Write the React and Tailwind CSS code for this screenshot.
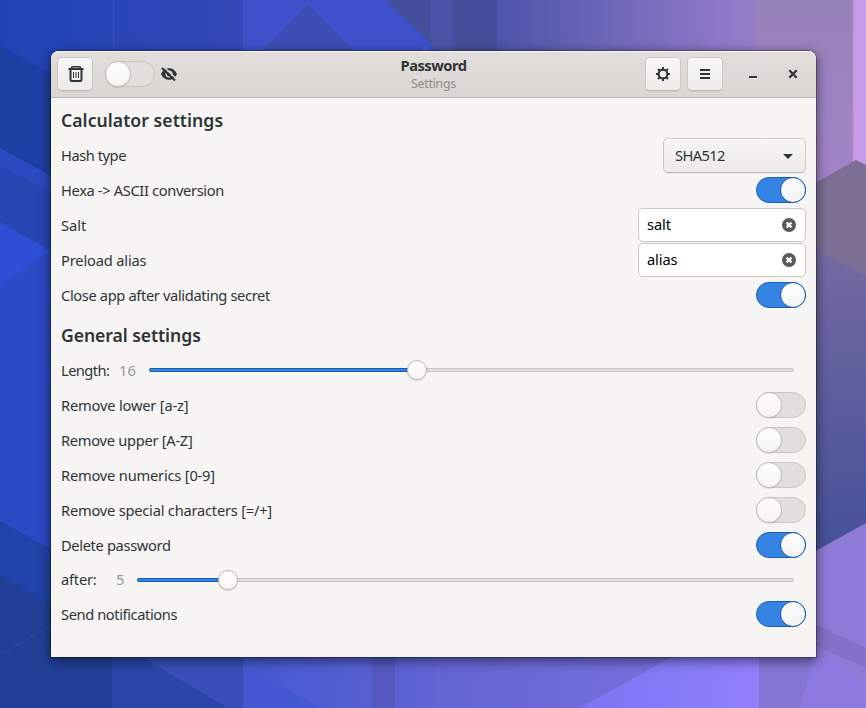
import React from "react";
import clsx from "clsx";

function Wallpaper() {
  return (
    <svg className="absolute inset-0" width="866" height="708" viewBox="0 0 866 708">
      <defs>
        <linearGradient id="base" x1="0" x2="1" y1="0" y2="0">
          <stop offset="0" stopColor="#1f43b6" />
          <stop offset="0.28" stopColor="#3449b8" />
          <stop offset="0.57" stopColor="#4a52a5" />
          <stop offset="0.87" stopColor="#977ccb" />
          <stop offset="1" stopColor="#a98bbd" />
        </linearGradient>
        <linearGradient id="violet" x1="0" x2="1" y1="0" y2="0">
          <stop offset="0" stopColor="#4d55aa" />
          <stop offset="1" stopColor="#987dcc" />
        </linearGradient>
        <linearGradient id="mauve" x1="0" x2="0" y1="0" y2="1">
          <stop offset="0" stopColor="#9882ba" />
          <stop offset="1" stopColor="#a384c8" />
        </linearGradient>
        <linearGradient id="indigo" x1="0" x2="0" y1="0" y2="1">
          <stop offset="0" stopColor="#756aa3" />
          <stop offset="1" stopColor="#445098" />
        </linearGradient>
        <linearGradient id="floor" gradientUnits="userSpaceOnUse" x1="243" x2="660" y1="0" y2="0">
          <stop offset="0" stopColor="#4458d0" />
          <stop offset="0.5" stopColor="#6465d4" />
          <stop offset="1" stopColor="#766fdc" />
        </linearGradient>
        <linearGradient id="glow" gradientUnits="userSpaceOnUse" x1="580" x2="759" y1="0" y2="0">
          <stop offset="0" stopColor="#7a75f2" />
          <stop offset="1" stopColor="#9280fd" />
        </linearGradient>
      </defs>
      <rect width="866" height="708" fill="url(#base)" />
      <path d="M113.5 0V60" stroke="#3650c0" strokeWidth="1.5" />
      <path d="M243 0H386L480 90H230L243 70Z" fill="#3f50cb" />
      <path d="M308 4L394 90H222Z" fill="#3c4eb6" />
      <path d="M386 0H497V90H480Z" fill="#454e9a" />
      <path d="M430 0H453V66L430 43Z" fill="#4b53a6" />
      <path d="M425 46L438 59V88H394L388 81Z" fill="#4e59d6" />
      <rect x="497" width="258" height="90" fill="url(#violet)" />
      <rect x="755" width="98" height="190" fill="url(#mauve)" />
      <rect x="853" width="13" height="170" fill="#c79de9" />
      <path d="M853 0V158" stroke="#b58dbd" strokeWidth="1" />
      <path d="M810 186L856 160L866 165V280L810 250Z" fill="#7c6e95" />
      <path d="M810 247L866 276V530L810 555Z" fill="url(#indigo)" />
      <path d="M810 554L866 523V708H810Z" fill="#8f7ad7" />
      <path d="M810 622L866 648V668L810 643Z" fill="#8571c8" />
      <path d="M0 45L60 79V185L0 152Z" fill="#1c3fa3" />
      <path d="M0 148L60 181V197L0 167Z" fill="#2c49c2" />
      <path d="M0 166L60 196V258L0 222Z" fill="#2745b3" />
      <path d="M0 222L60 258V560L0 522Z" fill="#2b4ac5" />
      <path d="M0 222L51 251L0 285Z" fill="#2e4ed5" />
      <path d="M0 521L60 554V612L0 576Z" fill="#2142a8" />
      <path d="M0 576L60 608V650H113V708H0Z" fill="#213f97" />
      <path d="M0 655L60 620" stroke="#28479f" strokeWidth="1.5" />
      <rect x="112" y="650" width="131" height="58" fill="#2a46a9" />
      <path d="M130 650H243V708H228Z" fill="#394eb8" />
      <rect x="243" y="650" width="520" height="58" fill="url(#floor)" />
      <path d="M243 668L322 708H243Z" fill="#4358d2" />
      <rect x="371" y="650" width="24" height="58" fill="#5458bf" />
      <path d="M437 650V708" stroke="#696bdd" />
      <path d="M684 650H759V708H580Z" fill="url(#glow)" />
      <path d="M759 650H816L866 690V708H759Z" fill="#8475d3" />
      <path d="M816 648L866 686V708H800Z" fill="#8d7ae0" />
    </svg>
  );
}

function Switch({ on }) {
  return (
    <div
      className={clsx(
        "flex h-[26px] w-[50px] shrink-0 rounded-full border",
        on ? "justify-end border-[#185fb4] bg-[#3584e4]" : "justify-start border-[#cdc7c2] bg-[#e1dedb]"
      )}
    >
      <div
        className={clsx(
          "-m-px size-[26px] rounded-full border bg-linear-to-b from-white to-[#f4f3f2]",
          on ? "border-[#185fb4]" : "border-[#c4bdb6] shadow-[0_1px_1px_rgba(0,0,0,0.1)]"
        )}
      />
    </div>
  );
}

function HeaderButton({ children }) {
  return (
    <div className="flex h-[34px] w-9 shrink-0 items-center justify-center rounded-[5px] border border-[#cdc7c2] border-b-[#bfb8b1] bg-linear-to-b from-[#f8f7f7] to-[#edebe9] shadow-[inset_0_1px_white,0_1px_1px_rgba(0,0,0,0.07)]">
      {children}
    </div>
  );
}

function Row({ label, className, children }) {
  return (
    <div className="flex h-[35px] items-center justify-between pb-px">
      <span className={clsx("whitespace-nowrap", className)}>{label}</span>
      {children}
    </div>
  );
}

function Entry({ value }) {
  return (
    <div className="flex h-[34px] w-[168px] items-center justify-between rounded-[5px] border border-[#cdc7c2] bg-white pr-2 pb-px pl-2 text-black">
      <span className="-mt-px tracking-[-0.1px]">{value}</span>
      <svg className="mt-px" width="16" height="16" viewBox="0 0 16 16">
        <circle cx="8" cy="8" r="7" fill="#555b5c" />
        <path d="M5.6 5.6L10.4 10.4M10.4 5.6L5.6 10.4" stroke="white" strokeWidth="2.2" />
      </svg>
    </div>
  );
}

function Slider({ fraction }) {
  const percent = fraction * 100 + "%";
  return (
    <div className="relative h-1 flex-1 rounded-full border border-[#cdc7c2] bg-[#e1dedb]">
      <div
        className="absolute -top-px -left-px h-1 rounded-full border border-[#185fb4] bg-[#3584e4]"
        style={{ width: percent }}
      />
      <div
        className="absolute -top-[9px] -ml-2.5 size-5 rounded-full border border-[#bfb8b1] bg-linear-to-b from-white to-[#f6f5f4] shadow-[0_1px_2px_rgba(0,0,0,0.15)]"
        style={{ left: percent }}
      />
    </div>
  );
}

const teeth = [0, 45, 90, 135, 180, 225, 270, 315];

export default function App() {
  return (
    <div className="relative flex h-[708px] w-[866px] overflow-hidden pt-[51px] pl-[51px] font-['Noto_Sans',sans-serif] text-[14.67px] leading-5 text-[#2e3436]">
      <Wallpaper />
      <div className="relative flex h-[606px] w-[765px] flex-col rounded-t-lg bg-[#f6f5f4] shadow-[0_3px_12px_1px_rgba(0,0,0,0.5),0_0_0_1px_rgba(0,0,0,0.28)]">
        <header className="flex h-[47px] shrink-0 items-center rounded-t-lg border-b border-[#bfb8b1] bg-linear-to-b from-[#e1dedb] to-[#dad6d2] px-1.5 shadow-[inset_0_1px_rgba(255,255,255,0.8)]">
          <div className="flex flex-1 items-center">
            <HeaderButton>
              <svg className="ml-px" width="16" height="16" viewBox="0 0 16 16" fill="none" stroke="#2e3436">
                <path d="M0.5 3H15.5M2.5 4V13.5Q2.5 15 4 15H12Q13.5 15 13.5 13.5V4" strokeWidth="2" />
                <path d="M3.5 2.5V1.8Q3.5 0.8 4.5 0.8H11.5Q12.5 0.8 12.5 1.8V2.5" strokeWidth="1.5" />
                <path d="M5.5 6V12M8 6V12M10.5 6V12" strokeWidth="1" />
              </svg>
            </HeaderButton>
            <div className="ml-3">
              <Switch />
            </div>
            <svg className="ml-1.5" width="16" height="16" viewBox="0 0 16 16">
              <path d="M0 8Q2.6 2.2 8 2.2T16 8Q13.4 13.8 8 13.8T0 8Z" fill="#2e3436" />
              <circle cx="8" cy="8" r="3.6" fill="#dedad7" />
              <circle cx="8" cy="8" r="2.2" fill="#2e3436" />
              <path d="M2.8 0.8L15.8 13.4" stroke="#dedad7" strokeWidth="1.6" />
              <path d="M1 2L14 14.6" stroke="#2e3436" strokeWidth="2.1" />
            </svg>
          </div>
          <div className="flex flex-col items-center">
            <span className="-mt-px mb-px text-[14.67px] leading-5 font-bold tracking-[-0.5px]">Password</span>
            <span className="text-[12.2px] leading-4 tracking-[-0.2px] text-[#8b8c8b]">Settings</span>
          </div>
          <div className="flex flex-1 items-center justify-end">
            <HeaderButton>
              <svg width="16" height="16" viewBox="0 0 16 16" stroke="#2e3436" fill="none">
                <circle cx="8" cy="8" r="4.4" strokeWidth="2.1" />
                {teeth.map((angle) => (
                  <path key={angle} d="M8 1V3.5" strokeWidth="2" transform={`rotate(${angle} 8 8)`} />
                ))}
              </svg>
            </HeaderButton>
            <div className="ml-1.5">
              <HeaderButton>
                <svg width="16" height="16" viewBox="0 0 16 16" fill="#2e3436">
                  <path d="M3 3H13V5H3ZM3 7H13V9H3ZM3 11H13V13H3Z" />
                </svg>
              </HeaderButton>
            </div>
            <svg className="ml-[22px]" width="16" height="16" viewBox="0 0 16 16">
              <path d="M4 12.5H12" stroke="white" strokeOpacity="0.7" />
              <path d="M4 11H12" stroke="#2e3436" strokeWidth="2" />
            </svg>
            <svg className="mr-[9px] ml-6" width="16" height="16" viewBox="0 0 16 16">
              <path d="M4.5 5L11.5 12M11.5 5L4.5 12" stroke="white" strokeOpacity="0.7" strokeWidth="2" />
              <path d="M4.3 4.3L11.7 11.7M11.7 4.3L4.3 11.7" stroke="#2e3436" strokeWidth="2.3" />
            </svg>
          </div>
        </header>

        <main className="flex flex-col px-2.5 pt-[5px]">
          <Row label="Calculator settings" className="text-[17.6px] font-semibold tracking-[0.05px]" />
          <Row label="Hash type" className="tracking-[-0.45px]">
            <div className="-mb-px flex h-[35px] w-[143px] items-center justify-between rounded-[5px] border border-[#cdc7c2] border-b-[#bfb8b1] bg-linear-to-b from-[#f6f5f4] to-[#edebe9] pr-3 pl-[11px] shadow-[inset_0_1px_white,0_1px_1px_rgba(0,0,0,0.06)]">
              <span className="-mt-px tracking-[-0.6px]">SHA512</span>
              <svg className="mt-px" width="10" height="5" viewBox="0 0 10 5" fill="#2e3436">
                <path d="M0 0H10L5 5Z" />
              </svg>
            </div>
          </Row>
          <Row label="Hexa -> ASCII conversion" className="tracking-[-0.35px]"><Switch on /></Row>
          <Row label="Salt"><Entry value="salt" /></Row>
          <Row label="Preload alias" className="tracking-[-0.17px]"><Entry value="alias" /></Row>
          <Row label="Close app after validating secret" className="tracking-[-0.36px]"><Switch on /></Row>
          <div className="pt-[5px]">
            <Row label="General settings" className="text-[17.6px] font-semibold tracking-[-0.07px]" />
          </div>
          <div className="flex h-[35px] items-center pr-3 pb-px">
            <span className="w-[58px] tracking-[-0.55px]">Length:</span>
            <span className="w-[30px] text-[#929595]">16</span>
            <Slider fraction={0.4155} />
          </div>
          <Row label="Remove lower [a-z]" className="tracking-[-0.18px]"><Switch /></Row>
          <Row label="Remove upper [A-Z]" className="tracking-[-0.28px]"><Switch /></Row>
          <Row label="Remove numerics [0-9]" className="tracking-[-0.2px]"><Switch /></Row>
          <Row label="Remove special characters [=/+]" className="tracking-[-0.22px]"><Switch /></Row>
          <Row label="Delete password" className="tracking-[-0.35px]"><Switch on /></Row>
          <div className="flex h-[34px] items-center pr-3">
            <span className="-mt-0.5 w-[55px] tracking-[-0.2px]">after:</span>
            <span className="-mt-0.5 w-[21px] text-[#929595]">5</span>
            <Slider fraction={0.1375} />
          </div>
          <Row label="Send notifications" className="tracking-[-0.4px]"><Switch on /></Row>
        </main>
      </div>
    </div>
  );
}
